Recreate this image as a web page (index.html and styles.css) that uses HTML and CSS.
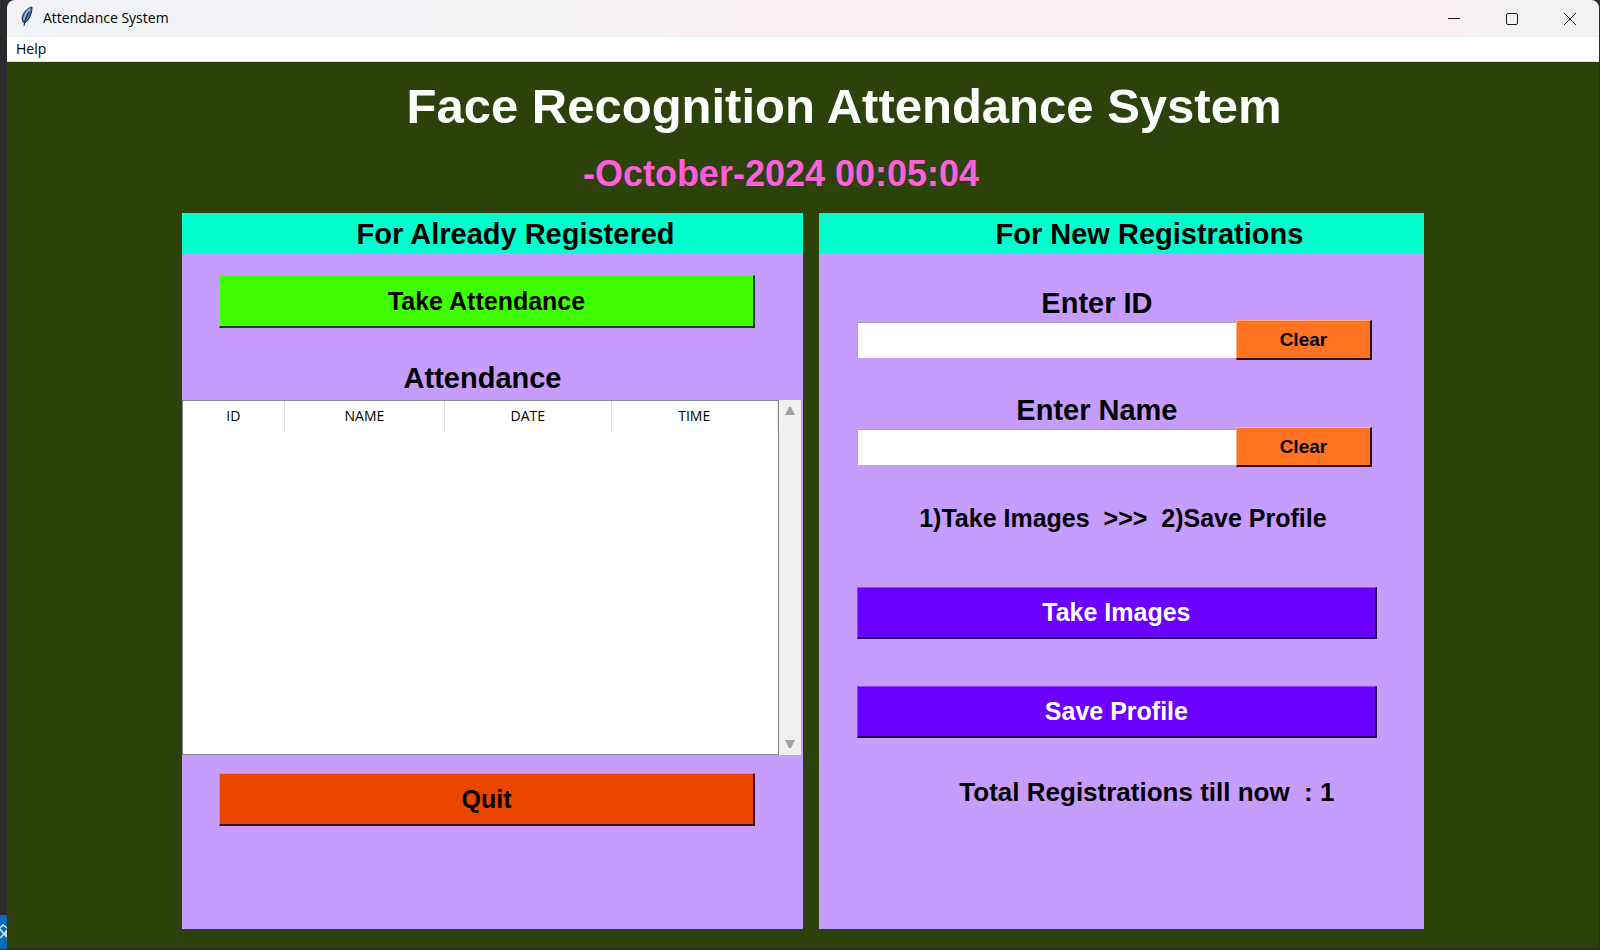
FILE: index.html
```html
<!DOCTYPE html>
<html lang="en">
<head>
<meta charset="utf-8">
<title>Attendance System</title>
<link rel="stylesheet" href="styles.css">
</head>
<body>
<aside class="desktop-edge" aria-hidden="true">
  <svg class="edge-icon" viewBox="0 0 7 34" width="7" height="34"><rect width="7" height="34" fill="#0b6bb3"/><path d="M0 13l3-3 4 3M0 14l3 4 4 4M7 15l-3 4-4 4M7 17l-2 2 2 1" fill="none" stroke="#d3e6f4" stroke-width="1.5"/></svg>
</aside>
<div class="window">
  <header class="titlebar">
    <svg class="feather" viewBox="0 0 14 22" width="14" height="22" aria-hidden="true">
      <path d="M12 1C7 2 3 7 2 12l1 4 2 1c4-3 7-9 7-16z" fill="#3d6ea8" stroke="#1d2a3c" stroke-width="1"/>
      <path d="M10 3C7 5 5 9 4 14" fill="none" stroke="#8fb8de" stroke-width="2"/>
      <path d="M9 6C6 10 5 14 4 20" fill="none" stroke="#20242c" stroke-width="1"/>
    </svg>
    <span class="window-name">Attendance System</span>
    <div class="window-controls">
      <button type="button" aria-label="Minimize"><svg viewBox="0 0 14 14" width="14" height="14"><path d="M1 6.500h12" /></svg></button>
      <button type="button" aria-label="Maximize"><svg viewBox="0 0 14 14" width="14" height="14"><rect x="1.500" y="1.500" width="11" height="11" rx="1.500"/></svg></button>
      <button type="button" aria-label="Close"><svg viewBox="0 0 14 14" width="14" height="14"><path d="M1 1l12 12M13 1L1 13"/></svg></button>
    </div>
  </header>
  <nav class="menubar"><button type="button">Help</button></nav>
  <main class="content">
    <h1 class="app-title">Face Recognition Attendance System</h1>
    <p class="clock">-October-2024 00:05:04</p>
    <div class="panels">
      <section class="panel panel-registered">
        <h2 class="panel-head">For Already Registered</h2>
        <button type="button" class="btn btn-wide btn-take">Take Attendance</button>
        <h3 class="list-title">Attendance</h3>
        <div class="list">
          <div class="list-body">
            <table class="records">
              <thead><tr><th class="col-id">ID</th><th class="col-name">NAME</th><th>DATE</th><th>TIME</th></tr></thead>
              <tbody></tbody>
            </table>
          </div>
          <div class="scrollbar">
            <button type="button" aria-label="Scroll up"><svg viewBox="0 0 12 10" width="12" height="10"><path d="M5 1h2l4 8H1z"/></svg></button>
            <button type="button" aria-label="Scroll down"><svg viewBox="0 0 12 10" width="12" height="10"><path d="M1 1h10L7 9H5z"/></svg></button>
          </div>
        </div>
        <button type="button" class="btn btn-wide btn-quit">Quit</button>
      </section>
      <section class="panel panel-new">
        <h2 class="panel-head">For New Registrations</h2>
        <form class="form">
          <div class="field">
            <label for="user-id">Enter ID</label>
            <div class="field-row"><input id="user-id" type="text"><button type="button" class="btn btn-clear">Clear</button></div>
          </div>
          <div class="field">
            <label for="user-name">Enter Name</label>
            <div class="field-row"><input id="user-name" type="text"><button type="button" class="btn btn-clear">Clear</button></div>
          </div>
          <p class="steps">1)Take Images  &gt;&gt;&gt;  2)Save Profile</p>
          <button type="button" class="btn btn-primary">Take Images</button>
          <button type="button" class="btn btn-primary">Save Profile</button>
          <p class="total">Total Registrations till now  : 1</p>
        </form>
      </section>
    </div>
  </main>
</div>
</body>
</html>
```
FILE: styles.css
```css
* { box-sizing: border-box; }

body {
  margin: 0;
  min-height: 100vh;
  display: flex;
  background: #2b2b2e;
  font-family: "Liberation Sans", Arial, sans-serif;
  color: #000;
}

h1, h2, h3, p { margin: 0; font-weight: bold; }
button { font: inherit; color: inherit; padding: 0; border: 0; background: none; }

.desktop-edge {
  flex: 0 0 7px;
  display: flex;
  align-items: flex-end;
  padding-bottom: 1px;
}
.edge-icon { display: block; }

.window {
  flex: 1;
  display: flex;
  flex-direction: column;
  margin: 0 1px 2px 0;
  border-radius: 8px 8px 0 0;
  overflow: hidden;
  background: #2d410b;
}

.titlebar {
  display: flex;
  align-items: center;
  height: 37px;
  padding-left: 13px;
  background: linear-gradient(90deg, #f0f2f5 0%, #f1f2f5 25%, #faeff0 55%, #faeff0 88%, #f3f1f4 95%);
  font: 14px/20px "Open Sans", sans-serif;
}
.feather { margin: 0 9px 4px 0; }
.window-name { padding-bottom: 2px; }
.window-controls { display: flex; margin-left: auto; }
.window-controls button {
  display: flex;
  align-items: center;
  justify-content: center;
  width: 58px;
  height: 36px;
}
.window-controls svg { fill: none; stroke: #1a1a1a; stroke-width: 1; }

.menubar {
  display: flex;
  height: 25px;
  padding-left: 9px;
  background: #fff;
  border-bottom: 1px solid #dfe3d8;
  font: 14px/24px "Open Sans", sans-serif;
}

.content { flex: 1; display: flex; flex-direction: column; padding-bottom: 19px; }

.app-title {
  padding: 16px 0 0 82px;
  text-align: center;
  color: #fff;
  font-size: 49px;
  line-height: 56px;
}
.clock {
  padding: 20px 44px 19px 0;
  text-align: center;
  color: #ff5fdc;
  font-size: 36px;
  line-height: 40px;
}

.panels {
  flex: 1;
  display: grid;
  grid-template-columns: 39fr 38fr;
  column-gap: 16px;
  padding: 0 11%;
}
.panel { background: #c69cff; }
.panel-head {
  padding: 1px 0 0 46px;
  background: #00ffcc;
  text-align: center;
  font-size: 29px;
  line-height: 40px;
}
.panel-new .panel-head { padding-left: 56px; }

.btn {
  border: 1px solid;
  border-width: 1px 2px 2px 1px;
  font-weight: bold;
}
.btn-wide {
  display: block;
  width: calc(100% - 85px);
  height: 53px;
  margin-left: 37px;
  font-size: 25px;
}
.btn-take {
  margin-top: 21px;
  background: #40ff00;
  border-color: #76e070 #1c3a14 #1c3a14 #76e070;
}
.btn-quit {
  margin-top: 18px;
  background: #ea4600;
  border-color: #f78a66 #3a1020 #3a1020 #f78a66;
}

.list-title {
  padding: 34px 20px 5px 0;
  text-align: center;
  font-size: 29px;
  line-height: 33px;
}
.list { display: flex; height: 355px; padding-right: 2px; }
.list-body { flex: 1; background: #fff; border: 1px solid #828790; }
.records {
  width: 100%;
  border-collapse: collapse;
  table-layout: fixed;
  font: 14px/30px "Open Sans", sans-serif;
}
.records th { padding: 0; font-weight: normal; border-right: 1px solid #e2e2e2; }
.records .col-id { width: 17%; }
.records .col-name { width: 27%; }
.scrollbar {
  flex: 0 0 22px;
  display: flex;
  flex-direction: column;
  justify-content: space-between;
  background: #f0f0f0;
}
.scrollbar button {
  display: flex;
  align-items: center;
  justify-content: center;
  height: 22px;
}
.scrollbar svg { fill: #a3a3a3; }

.form {
  display: flex;
  flex-direction: column;
  padding: 32px 47px 0 38px;
}
.field { height: 107px; }
.field label {
  display: block;
  padding-right: 40px;
  text-align: center;
  font-size: 29px;
  font-weight: bold;
  line-height: 34px;
}
.field-row { display: flex; align-items: center; padding-right: 5px; }
.field-row input {
  flex: 1;
  min-width: 0;
  height: 36px;
  padding: 0 4px;
  border: 1px solid;
  border-color: #a9a0b4 #fff #fff #a9a0b4;
  border-right: 0;
  background: #fff;
  font: 20px "Liberation Sans", sans-serif;
}
.btn-clear {
  width: 136px;
  height: 40px;
  background: #ff7221;
  border-color: #ffb48c #2a1010 #2a1010 #ffb48c;
  font-size: 19px;
}
.steps {
  padding: 2px 0 53px 12px;
  text-align: center;
  white-space: pre;
  font-size: 25px;
  line-height: 32px;
}
.btn-primary {
  height: 52px;
  margin-bottom: 47px;
  background: #6a00fe;
  border-color: #8f45ff #22004f #22004f #8f45ff;
  color: #fff;
  font-size: 25px;
}
.total {
  margin-top: -8px;
  padding-left: 60px;
  text-align: center;
  white-space: pre;
  font-size: 26px;
  line-height: 30px;
}
```
